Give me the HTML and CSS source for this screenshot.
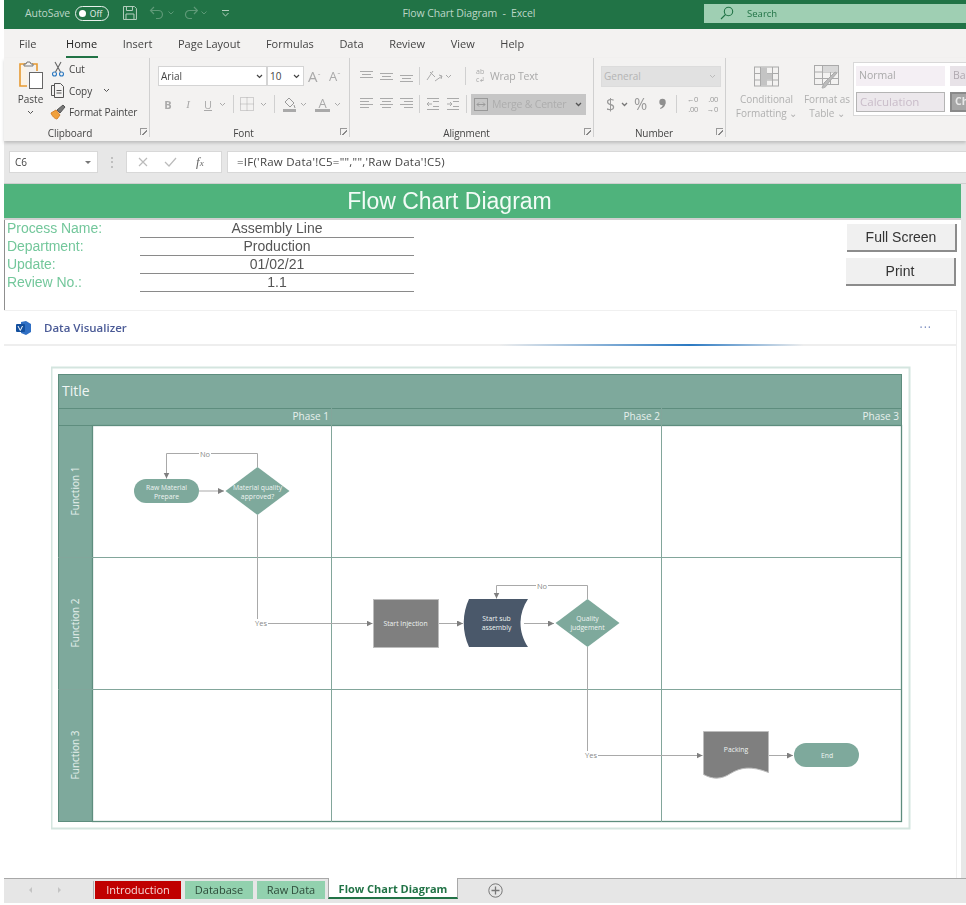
FILE: index.html
```html
<!DOCTYPE html>
<html lang="en">
<head>
<meta charset="utf-8">
<title>Flow Chart Diagram - Excel</title>
<link rel="stylesheet" href="styles.css">
</head>
<body>
<div class="app">
  <header class="titlebar">
    <span class="autosave">AutoSave</span>
    <span class="toggle"><i class="knob"></i><b>Off</b></span>
    <svg class="qat-save" width="16" height="16" viewBox="0 0 16 16" fill="none" stroke="#b5d0bf"><path d="M1.500 1.500h11l2 2v11h-13z"/><path d="M4.500 1.500v4h6v-4M4 14.500v-5.500h8v5.500"/></svg>
    <svg class="qat-undo" width="16" height="14" viewBox="0 0 16 14" fill="none" stroke="#5f9a78" stroke-width="1.200"><path d="M5 1 1.500 4.500 5 8M1.500 4.500h8a4 4 0 0 1 0 8H7"/></svg>
    <svg class="qat-chev" width="6" height="4" viewBox="0 0 6 4" fill="none" stroke="#5f9a78"><path d="m.5.500 2.500 2.500 2.500-2.500"/></svg>
    <svg class="qat-redo" width="16" height="14" viewBox="0 0 16 14" fill="none" stroke="#5f9a78" stroke-width="1.200"><path d="M11 1l3.500 3.500L11 8M14.500 4.500h-8a4 4 0 0 0 0 8H9"/></svg>
    <svg class="qat-chev" width="6" height="4" viewBox="0 0 6 4" fill="none" stroke="#5f9a78"><path d="m.5.500 2.500 2.500 2.500-2.500"/></svg>
    <svg class="qat-more" width="7" height="7" viewBox="0 0 7 7" fill="none" stroke="#b5d0bf"><path d="M0 .500h7M.5 3l3 3 3-3"/></svg>
    <span class="doc-title">Flow Chart Diagram &nbsp;-&nbsp; Excel</span>
    <div class="search">
      <svg width="14" height="14" viewBox="0 0 14 14" fill="none" stroke="#217346" stroke-width="1.100"><circle cx="8.500" cy="5.500" r="4.200"/><path d="M5.500 8.500 1 13"/></svg>
      <span>Search</span>
    </div>
  </header>

  <nav class="tabs">
    <span class="tab">File</span>
    <span class="tab tab-home">Home</span>
    <span class="tab">Insert</span>
    <span class="tab">Page Layout</span>
    <span class="tab">Formulas</span>
    <span class="tab">Data</span>
    <span class="tab">Review</span>
    <span class="tab">View</span>
    <span class="tab">Help</span>
  </nav>

  <section class="ribbon">
    <div class="group g-clip">
      <div class="group-body clip-body">
        <div class="paste">
          <svg width="26" height="29" viewBox="0 0 26 29" fill="none"><path d="M8 3H2v22h7" stroke="#e79a32" stroke-width="1.600" fill="#fbf3e6"/><path d="M14 3h5v7" stroke="#e79a32" stroke-width="1.600"/><path d="M6 5V3h2l1-2h3l1 2h2v2z" fill="#f3f2f1" stroke="#777"/><rect x="11.500" y="11.500" width="13" height="16" fill="#fff" stroke="#666"/></svg>
          <span>Paste</span>
          <svg class="chev" width="7" height="5" viewBox="0 0 7 5" fill="none" stroke="#555"><path d="m1 1 2.500 2.500L6 1"/></svg>
        </div>
        <div class="clip-list">
          <div class="clip-item">
            <svg width="16" height="16" viewBox="0 0 16 16" fill="none" stroke-width="1.100"><path d="M5 1l5.500 10M11 1 5.500 11" stroke="#666"/><circle cx="4.500" cy="13" r="2" stroke="#2b79c2"/><circle cx="11.500" cy="13" r="2" stroke="#2b79c2"/></svg>
            <span>Cut</span>
          </div>
          <div class="clip-item">
            <svg width="16" height="16" viewBox="0 0 16 16" fill="none" stroke="#555"><path d="M4.500 2.500h-3v10h3"/><path d="M4.500 .5h6l3 3v11h-9z" fill="#f3f2f1"/><path d="M6.500 7.500h5M6.500 10h5"/></svg>
            <span>Copy</span>
            <svg class="copy-chev" width="7" height="5" viewBox="0 0 7 5" fill="none" stroke="#555"><path d="m1 1 2.500 2.500L6 1"/></svg>
          </div>
          <div class="clip-item">
            <svg width="16" height="16" viewBox="0 0 16 16" fill="none"><path d="M1 9l5-3 4 5-3 4c-2 0-5-3-6-6z" fill="#f0a03c" stroke="#d9822b"/><path d="M7 6l6-5 2 2-5 6z" fill="#777" stroke="#555"/></svg>
            <span>Format Painter</span>
          </div>
        </div>
      </div>
      <div class="group-label lb-clip"><span>Clipboard</span><i class="launcher"></i></div>
    </div>

    <div class="group g-font">
      <div class="group-body">
        <div class="row font-row1">
          <div class="combo combo-font"><span>Arial</span><svg width="7" height="5" viewBox="0 0 7 5" fill="none" stroke="#444" stroke-width="1.200"><path d="m1 1 2.500 2.500L6 1"/></svg></div>
          <div class="combo combo-size"><span>10</span><svg width="7" height="5" viewBox="0 0 7 5" fill="none" stroke="#444" stroke-width="1.200"><path d="m1 1 2.500 2.500L6 1"/></svg></div>
          <span class="grow">A<sup>ˆ</sup></span>
          <span class="shrink">A<sup>ˇ</sup></span>
        </div>
        <div class="row font-row2">
          <span class="slot bold">B</span>
          <span class="slot italic">I</span>
          <span class="slot under">U</span>
          <svg class="m2" width="7" height="5" viewBox="0 0 7 5" fill="none" stroke="#aaa"><path d="m1 1 2.500 2.500L6 1"/></svg>
          <i class="sep sep-a"></i>
          <svg width="14" height="14" viewBox="0 0 14 14" fill="none" stroke="#aaa" stroke-dasharray="1 1"><path d="M.5.500h13v13H.5zM7 .5v13M.5 7h13"/></svg>
          <svg class="m6" width="7" height="5" viewBox="0 0 7 5" fill="none" stroke="#aaa"><path d="m1 1 2.500 2.500L6 1"/></svg>
          <i class="sep sep-b"></i>
          <svg width="15" height="15" viewBox="0 0 15 15" fill="none"><path d="M7 1l5 5-4 4-5-5z" stroke="#999"/><path d="M12 8l1 3" stroke="#999"/><rect x="1" y="12" width="13" height="3" fill="#a9a9a9"/></svg>
          <svg class="m3" width="7" height="5" viewBox="0 0 7 5" fill="none" stroke="#aaa"><path d="m1 1 2.500 2.500L6 1"/></svg>
          <span class="font-color">A</span>
          <svg class="m4" width="7" height="5" viewBox="0 0 7 5" fill="none" stroke="#aaa"><path d="m1 1 2.500 2.500L6 1"/></svg>
        </div>
      </div>
      <div class="group-label lb-font"><span>Font</span><i class="launcher"></i></div>
    </div>

    <div class="group g-align">
      <div class="group-body">
        <div class="row align-row1">
          <svg width="20" height="12" viewBox="0 0 20 12" stroke="#aaa"><path d="M3 1.500h13M5 4.500h9M3 7.500h13"/></svg>
          <svg width="20" height="12" viewBox="0 0 20 12" stroke="#aaa"><path d="M3 3.500h13M5 6.500h9M3 9.500h13"/></svg>
          <svg width="20" height="12" viewBox="0 0 20 12" stroke="#aaa"><path d="M3 5.500h13M5 8.500h9M3 11.500h13"/></svg>
          <i class="sep sep-c"></i>
          <svg width="17" height="14" viewBox="0 0 17 14" fill="none" stroke="#aaa"><path d="M1 11 7 2M4 3l5 5M9 12l7-5M13 6l3 1-1 3"/></svg>
          <svg class="m2" width="7" height="5" viewBox="0 0 7 5" fill="none" stroke="#aaa"><path d="m1 1 2.500 2.500L6 1"/></svg>
          <i class="sep sep-d"></i>
          <span class="wrap-ico">ab<br>c↲</span>
          <span class="wrap-text">Wrap Text</span>
        </div>
        <div class="row align-row2">
          <svg width="20" height="12" viewBox="0 0 20 12" stroke="#aaa"><path d="M3 .5h13M3 3.500h9M3 6.500h13M3 9.500h9"/></svg>
          <svg width="20" height="12" viewBox="0 0 20 12" stroke="#aaa"><path d="M3 .5h13M5 3.500h9M3 6.500h13M5 9.500h9"/></svg>
          <svg width="20" height="12" viewBox="0 0 20 12" stroke="#aaa"><path d="M3 .5h13M7 3.500h9M3 6.500h13M7 9.500h9"/></svg>
          <i class="sep sep-c"></i>
          <svg width="14" height="12" viewBox="0 0 14 12" fill="none" stroke="#aaa"><path d="M1 .5h12M7 3.500h6M6 6H1m2-2L1 6l2 2M7 8.500h6M1 11.500h12"/></svg>
          <svg class="m6" width="14" height="12" viewBox="0 0 14 12" fill="none" stroke="#aaa"><path d="M1 .5h12M7 3.500h6M1 6h5m-2-2 2 2-2 2M7 8.500h6M1 11.500h12"/></svg>
          <i class="sep sep-e"></i>
          <div class="merge">
            <svg width="14" height="13" viewBox="0 0 14 13" fill="none" stroke="#999"><rect x=".5" y=".5" width="13" height="12"/><path d="M3 6.500h8m-2-2 2 2-2 2M5 4.500l-2 2 2 2"/></svg>
            <span>Merge &amp; Center</span>
            <svg width="7" height="5" viewBox="0 0 7 5" fill="none" stroke="#555" stroke-width="1.300"><path d="m1 1 2.500 2.500L6 1"/></svg>
          </div>
        </div>
      </div>
      <div class="group-label lb-align"><span>Alignment</span><i class="launcher"></i></div>
    </div>

    <div class="group g-num">
      <div class="group-body">
        <div class="row num-row1">
          <div class="combo combo-num"><span>General</span><svg width="7" height="5" viewBox="0 0 7 5" fill="none" stroke="#bbb"><path d="m1 1 2.500 2.500L6 1"/></svg></div>
        </div>
        <div class="row num-row2">
          <span class="num-dollar">$</span>
          <svg class="m-dollar" width="7" height="5" viewBox="0 0 7 5" fill="none" stroke="#777" stroke-width="1.300"><path d="m1 1 2.500 2.500L6 1"/></svg>
          <span class="num-pct">%</span>
          <svg class="num-comma" width="9" height="14" viewBox="0 0 9 14" fill="#8f8f8f"><circle cx="4.500" cy="5" r="3.200"/><path d="M7.500 5.500C7.500 9 5.500 11 2.500 12l-.5-1C4 10 5 8.500 5 7z"/></svg>
          <i class="sep sep-f"></i>
          <span class="dec">←0<br>.00</span>
          <span class="dec dec2">.00<br>→0</span>
        </div>
      </div>
      <div class="group-label lb-num"><span>Number</span><i class="launcher"></i></div>
    </div>

    <div class="g-styles">
      <div class="style-btn sb-cond">
        <svg width="26" height="21" viewBox="0 0 26 21" fill="none" stroke="#aaa"><rect x=".5" y=".5" width="24" height="19"/><path d="M.5 7h24M.5 13.500h24M6.500.5v19M18.500.5v19"/><path d="M7 1h6v6h5v6h-5v6H7z" fill="#c4c4c4" stroke="none"/></svg>
        <span>Conditional<br>Formatting ⌄</span>
      </div>
      <div class="style-btn sb-table">
        <svg width="26" height="24" viewBox="0 0 26 24" fill="none" stroke="#aaa"><rect x=".5" y=".5" width="24" height="19"/><path d="M.5 7h24M.5 13.500h24M8.500.5v19M16.500.5v19"/><path d="M9 1h15v6H9z" fill="#d8d8d8" stroke="none"/><path d="M23 8 15 17l-2 3c-1 2-3 3-5 3l2-5 11-11z" fill="#bbb"/></svg>
        <span>Format as<br>Table ⌄</span>
      </div>
      <div class="style-box">
        <div class="cell-style cs-normal">Normal</div>
        <div class="cell-style cs-bad">Bad</div>
        <div class="cell-style cs-calc">Calculation</div>
        <div class="cell-style cs-check">Check</div>
      </div>
    </div>
  </section>

  <section class="formula">
    <div class="namebox"><span>C6</span><i class="tri"></i></div>
    <span class="vdots">⋮</span>
    <div class="fx-btns">
      <svg width="12" height="12" viewBox="0 0 12 12" fill="none" stroke="#bbb" stroke-width="1.200"><path d="m2 2 8 8M10 2l-8 8"/></svg>
      <svg width="14" height="12" viewBox="0 0 14 12" fill="none" stroke="#bbb" stroke-width="1.200"><path d="m2 6 4 4 7-8"/></svg>
      <span class="fx"><i>f</i><small>x</small></span>
    </div>
    <div class="fx-input">=IF('Raw Data'!C5="","",'Raw Data'!C5)</div>
  </section>

  <main class="sheet">
    <div class="sheet-main">
      <h1 class="banner">Flow Chart Diagram</h1>
      <div class="form-area">
        <dl class="form">
          <dt>Process Name:</dt><dd>Assembly Line</dd>
          <dt>Department:</dt><dd>Production</dd>
          <dt>Update:</dt><dd>01/02/21</dd>
          <dt>Review No.:</dt><dd>1.1</dd>
        </dl>
        <div class="sheet-btns">
          <button class="xl-btn btn-full">Full Screen</button>
          <button class="xl-btn">Print</button>
        </div>
      </div>
      <section class="panel">
        <div class="panel-head">
          <svg width="15" height="14" viewBox="0 0 15 14"><path d="M5 1 10 0l5 3v8l-5 3-5-2z" fill="#2f6fc4"/><rect x="0" y="3" width="9" height="8" rx="1" fill="#124f9e"/><path d="m2 5 2.300 4.500L6.500 5" fill="none" stroke="#fff"/></svg>
          <strong>Data Visualizer</strong>
          <span class="dots">···</span>
        </div>
        <div class="panel-rule"></div>
        <div class="canvas">
          <svg class="chart" width="860" height="464" viewBox="51 366 860 464">
            <defs>
              <marker id="ah" markerWidth="7" markerHeight="7" refX="6" refY="3" orient="auto" markerUnits="userSpaceOnUse"><path d="M0 0 6 3 0 6z" fill="#7f7f7f"/></marker>
            </defs>
            <rect class="frame" x="51.500" y="367.500" width="858" height="461"/>
            <rect class="band" x="58.500" y="374.500" width="843" height="34"/>
            <rect class="band" x="58.500" y="408.500" width="843" height="17"/>
            <rect class="band" x="58.500" y="425.500" width="34" height="396"/>
            <rect class="lane" x="92.500" y="425.500" width="809" height="396"/>
            <path class="grid" d="M58 557.500h843M58 689.500h843M331.500 408v414M661.500 408v414"/>
            <text class="t-title" x="62" y="396">Title</text>
            <text class="t-phase" x="329" y="420">Phase 1</text>
            <text class="t-phase" x="660" y="420">Phase 2</text>
            <text class="t-phase" x="899" y="420">Phase 3</text>
            <text class="t-func" transform="translate(79 491) rotate(-90)">Function 1</text>
            <text class="t-func" transform="translate(79 623) rotate(-90)">Function 2</text>
            <text class="t-func" transform="translate(79 755) rotate(-90)">Function 3</text>

            <path class="conn" d="M199 491h25" marker-end="url(#ah)"/>
            <path class="conn" d="M257.500 467v-13.500h-91v25" marker-end="url(#ah)"/>
            <path class="conn" d="M257.500 515v108.500h115" marker-end="url(#ah)"/>
            <path class="conn" d="M438 623.500h25" marker-end="url(#ah)"/>
            <path class="conn" d="M524 623.500h30" marker-end="url(#ah)"/>
            <path class="conn" d="M587.500 599v-13.500h-91v13" marker-end="url(#ah)"/>
            <path class="conn" d="M587.500 647v108.500h115" marker-end="url(#ah)"/>
            <path class="conn" d="M769 755.500h24" marker-end="url(#ah)"/>

            <rect class="t-bg" x="199" y="450" width="12" height="8"/>
            <text class="t-lbl" x="205" y="457">No</text>
            <rect class="t-bg" x="255" y="619" width="13" height="8"/>
            <text class="t-lbl" x="261" y="626">Yes</text>
            <rect class="t-bg" x="536" y="582" width="12" height="8"/>
            <text class="t-lbl" x="542" y="589">No</text>
            <rect class="t-bg" x="585" y="751" width="13" height="8"/>
            <text class="t-lbl" x="591" y="758">Yes</text>

            <rect class="s-teal" x="134" y="479" width="65" height="24" rx="12"/>
            <text class="t-node" x="166.500" y="489.500">Raw Material</text>
            <text class="t-node" x="166.500" y="498.500">Prepare</text>
            <path class="s-teal" d="M257.500 467 289.500 491 257.500 515 225.500 491z"/>
            <text class="t-node" x="257.500" y="489.500">Material quality</text>
            <text class="t-node" x="257.500" y="498.500">approved?</text>

            <rect class="s-grey" x="373.500" y="599.500" width="65" height="48"/>
            <text class="t-node" x="405.500" y="626">Start Injection</text>
            <path class="s-navy" d="M469 599h59c-10 15-10 33 0 48h-59c-7-15-7-33 0-48z"/>
            <text class="t-node" x="496.500" y="621">Start sub</text>
            <text class="t-node" x="496.500" y="630">assembly</text>
            <path class="s-teal" d="M587.500 599 619.500 623 587.500 647 555.500 623z"/>
            <text class="t-node" x="587.500" y="621">Quality</text>
            <text class="t-node" x="587.500" y="630">judgement</text>

            <path class="s-grey" d="M703.500 731.500h65v41c-18-7-28-5-38 1-9 6-18 6-27 1z"/>
            <text class="t-node" x="736" y="752">Packing</text>
            <rect class="s-teal" x="794" y="743" width="65" height="24" rx="12"/>
            <text class="t-node" x="827" y="758">End</text>
          </svg>
        </div>
      </section>
    </div>
    <div class="scrollbar"></div>
  </main>

  <footer class="sheetbar">
    <svg class="nav-arrows" width="34" height="8" viewBox="0 0 34 8"><path d="M4 1 1 4l3 3zM30 1l3 3-3 3z" fill="#c4c4c4"/></svg>
    <i class="tab-sep"></i>
    <span class="stab stab-red">Introduction</span>
    <span class="stab stab-green">Database</span>
    <span class="stab stab-green">Raw Data</span>
    <span class="stab stab-active">Flow Chart Diagram</span>
    <svg class="add" width="15" height="15" viewBox="0 0 15 15" fill="none" stroke="#777"><circle cx="7.500" cy="7.500" r="6.700"/><path d="M7.500 3.500v8M3.500 7.500h8" stroke-width="1.300"/></svg>
  </footer>
</div>
</body>
</html>
```
FILE: styles.css
```css
* { box-sizing: border-box; }
html, body { margin: 0; padding: 0; background: #fff; }
body { font-family: "Open Sans", "Noto Sans", sans-serif; color: #444; }
.app { width: 966px; height: 905px; padding-left: 4px; overflow: hidden; filter: blur(.35px); }
i { font-style: normal; }

/* title bar */
.titlebar { height: 29px; padding-bottom: 3px; background: #217346; display: flex; align-items: center; color: #bcd6c6; font-size: 10.5px; }
.autosave { margin-left: 21px; width: 50px; letter-spacing: -.1px; }
.toggle { width: 34px; height: 15px; border: 1.5px solid #e8f1ec; border-radius: 8px; display: flex; align-items: center; padding-left: 3px; color: #e8f1ec; font-size: 8.5px; }
.toggle .knob { width: 7px; height: 7px; border-radius: 50%; background: #fff; margin-right: 4px; }
.toggle b { font-weight: 400; }
.qat-save { margin-left: 13px; }
.qat-undo { margin-left: 11px; }
.qat-chev { margin-left: 3px; }
.qat-redo { margin-left: 9px; }
.qat-more { margin-left: 15px; }
.doc-title { margin-left: 173px; width: 303px; font-size: 10.5px; color: #bcd6c6; letter-spacing: -.1px; white-space: nowrap; }
.search { width: 263px; height: 19px; background: #9fcfb3; display: flex; align-items: center; padding-left: 16px; color: #217346; font-size: 9.5px; }
.search span { margin-left: 13px; }

/* tabs */
.tabs { height: 29px; background: #f3f2f1; display: flex; align-items: center; padding-left: 15px; gap: 25.6px; font-size: 11px; color: #444; }
.tab { position: relative; line-height: 24px; white-space: nowrap; }
.tab-home { margin-left: 4px; color: #222; }
.tab-home::after { content: ""; position: absolute; left: 0; right: -1px; bottom: -2px; height: 2px; background: #217346; }

/* ribbon */
.ribbon { height: 83px; background: #f3f2f1; display: flex; font-size: 10px; box-shadow: 0 2px 3px rgba(0,0,0,.18); position: relative; }
.group { display: flex; flex-direction: column; height: 79px; border-right: 1px solid #d0d0d0; flex: none; }
.group-body { flex: 1; min-height: 0; }
.group-label { height: 14px; margin-bottom: -3px; flex: none; position: relative; text-align: center; font-size: 10px; color: #444; line-height: 14px; letter-spacing: -.1px; }
.lb-clip { padding-right: 13px; }
.lb-font { padding-right: 20px; }
.lb-align { padding-right: 17px; }
.lb-num { padding-right: 18px; }
.launcher { position: absolute; right: 2px; top: 2px; width: 7px; height: 7px; border-left: 1px solid #999; border-top: 1px solid #999; background: linear-gradient(135deg, transparent 55%, #888 55%, #888 70%, transparent 70%); }
.row { display: flex; align-items: center; }
.sep { display: block; width: 1px; height: 18px; background: #d0d0d0; flex: none; }
.m2 { margin-left: 2px; }
.m3 { margin-left: 3px; }
.m4 { margin-left: 4px; }
.m6 { margin-left: 6px; }
.g-clip { width: 146px; }
.clip-body { display: flex; padding: 3px 0 0 12px; }
.paste { width: 29px; display: flex; flex-direction: column; align-items: center; font-size: 10px; }
.paste span { margin-top: 2px; line-height: 14px; color: #444; }
.paste .chev { margin-top: 4px; }
.clip-list { margin-left: 5px; display: flex; flex-direction: column; gap: 5.500px; }
.clip-item { display: flex; align-items: center; height: 16px; gap: 3px; font-size: 10px; letter-spacing: -.1px; white-space: nowrap; }
.copy-chev { margin-left: 8px; }
.g-font { width: 200px; padding-left: 8px; }
.font-row1 { margin-top: 8px; height: 20px; }
.combo { height: 20px; background: #fff; border: 1px solid #d4d4d4; display: flex; align-items: center; justify-content: space-between; padding: 0 3px 0 2px; font-size: 10px; flex: none; }
.combo-font { width: 109px; }
.combo-size { width: 37px; }
.grow { margin-left: 4px; width: 21px; font-size: 15px; color: #a9a9a9; line-height: 1; white-space: nowrap; }
.shrink { width: 16px; font-size: 13px; color: #a9a9a9; line-height: 1; white-space: nowrap; }
.grow sup, .shrink sup { font-size: 8px; vertical-align: 3px; line-height: 0; }
.font-row2 { margin-top: 8px; height: 20px; }
.slot { width: 20px; text-align: center; color: #a9a9a9; font-size: 11px; flex: none; }
.bold { font-weight: 700; }
.italic { font-style: italic; font-family: "Liberation Serif", serif; }
.under { text-decoration: underline; margin-right: -1px; }
.sep-a { margin: 0 6px 0 7px; }
.sep-b { margin: 0 7px 0 7px; }
.font-color { width: 15px; margin-left: 8px; font-size: 13px; color: #a9a9a9; border-bottom: 3px solid #a9a9a9; line-height: 12px; text-align: center; flex: none; }
.g-align { width: 244px; padding-left: 7px; }
.align-row1 { margin-top: 8px; height: 20px; }
.sep-c { margin: 0 6px 0 2px; }
.sep-d { margin: 0 7px 0 13px; }
.wrap-ico { width: 14px; font-size: 7px; line-height: 8px; color: #a9a9a9; margin-left: 3px; }
.wrap-text { color: #a9a9a9; font-size: 10.5px; letter-spacing: -.2px; white-space: nowrap; }
.align-row2 { margin-top: 8px; height: 20px; }
.sep-e { margin: 0 4px 0 6px; }
.merge { width: 115px; height: 21px; background: #c6c6c6; display: flex; align-items: center; padding: 0 4px 0 3px; color: #adadad; font-size: 10.5px; letter-spacing: -.2px; white-space: nowrap; }
.merge span { margin: 0 auto 0 4px; }
.g-num { width: 132px; padding-left: 7px; }
.num-row1 { margin-top: 8px; height: 20px; }
.combo-num { width: 120px; height: 21px; background: #e1e1e1; border-color: #dcdcdc; color: #b4b4b4; padding: 0 4px 0 2px; }
.num-row2 { margin-top: 8px; height: 20px; padding-left: 5px; color: #999; }
.num-dollar { font-size: 16px; width: 9px; }
.m-dollar { margin-left: 6px; }
.num-pct { margin-left: 6px; font-size: 16px; width: 17px; }
.num-comma { margin-left: 7px; flex: none; }
.sep-f { margin: 0 6px 0 9px; }
.dec { font-size: 7.5px; line-height: 10px; width: 15px; text-align: right; letter-spacing: -.3px; white-space: nowrap; }
.dec2 { margin-left: 5px; }
.g-styles { flex: 1; display: flex; min-width: 0; overflow: hidden; }
.style-btn { display: flex; flex-direction: column; align-items: center; color: #b0b0b0; font-size: 10px; line-height: 14px; text-align: center; letter-spacing: -.05px; white-space: nowrap; flex: none; }
.style-btn svg { height: 24px; flex: none; margin-top: 7px; margin-bottom: 3px; }
.style-btn span { display: block; }
.sb-cond { width: 63px; margin-left: 9px; }
.sb-table { width: 52px; margin-left: 3px; }
.style-box { margin: 4px 0 0; width: 122px; height: 54px; background: #fff; border: 1px solid #d8d8d8; border-right: 0; display: grid; grid-template-columns: 89px 40px; grid-template-rows: 20px 20px; gap: 6px 5px; padding: 3px 0 0 2px; font-size: 10.5px; }
.cell-style { line-height: 19px; padding-left: 3px; white-space: nowrap; overflow: hidden; }
.cs-normal { background: #f4eff4; color: #a9a9a9; }
.cs-bad { background: #e8e3e8; color: #b0a9b0; }
.cs-calc { background: #ece8ec; border: 1px solid #b4b4b4; color: #c9bcc9; line-height: 17px; font-size: 11.5px; }
.cs-check { background: #a6a6a6; border: 2px solid #8a8a8a; color: #e8e8e8; line-height: 15px; font-weight: 700; }

/* formula bar */
.formula { height: 42px; background: #e7e7e7; display: flex; align-items: flex-start; padding: 10px 0 0 5px; }
.namebox { width: 89px; height: 22px; background: #fff; border: 1px solid #d8d8d8; display: flex; align-items: center; justify-content: space-between; padding: 0 6px 0 5px; font-size: 10px; }
.tri { width: 0; height: 0; border: 3.5px solid transparent; border-top-color: #777; border-bottom: 0; }
.vdots { width: 28px; text-align: center; color: #aaa; font-size: 12px; line-height: 22px; }
.fx-btns { width: 96px; height: 22px; background: #fff; border: 1px solid #d8d8d8; display: flex; align-items: center; padding-left: 10px; gap: 14px; }
.fx { color: #666; font-family: "Liberation Serif", serif; font-size: 13px; font-style: italic; margin-left: 5px; }
.fx i { font-style: italic; }
.fx small { font-size: 9px; }
.fx-input { flex: 1; height: 22px; margin-left: 5px; background: #fff; border: 1px solid #d8d8d8; border-right: 0; padding-left: 9px; font-size: 11.5px; line-height: 20px; color: #444; letter-spacing: .25px; white-space: nowrap; }

/* sheet */
.sheet { display: flex; height: 695px; border-top: 1px solid #cfcfcf; }
.sheet-main { width: 957px; display: flex; flex-direction: column; }
.scrollbar { flex: 1; background: #e7e7e7; }
.banner { margin: 0; height: 36px; padding-right: 66px; background: #4fb37c; border-bottom: 2px solid #d0d0d0; color: #f2fbf6; font: 400 23px/34px "Liberation Sans", sans-serif; text-align: center; }
.form-area { height: 90px; display: flex; justify-content: space-between; border-left: 1px solid #8f8f8f; padding-left: 2px; margin-right: 4px; font-family: "Liberation Sans", sans-serif; font-size: 14px; }
.form { margin: 0; display: grid; grid-template-columns: 133px 274px; grid-auto-rows: 18px; }
.form dt { color: #73c79b; line-height: 17px; letter-spacing: -.05px; white-space: nowrap; }
.form dd { margin: 0; text-align: center; line-height: 17px; border-bottom: 1px solid #8a8a8a; color: #555; }
.sheet-btns { display: flex; flex-direction: column; gap: 6px; padding-top: 4px; width: 111px; }
.xl-btn { width: 110px; height: 28px; background: #f0f0f0; border: 0; border-bottom: 2px solid #8c8c8c; border-right: 2px solid #8c8c8c; font: 14px "Liberation Sans", sans-serif; color: #333; padding: 0; }
.btn-full { margin-left: 1px; }
.panel { flex: 1; display: flex; flex-direction: column; margin-right: 4px; border-right: 1px solid #eee; border-top: 1px solid #f0f0f0; min-height: 0; }
.panel-head { height: 33px; display: flex; align-items: center; padding-left: 12px; font-size: 11.5px; }
.panel-head strong { margin-left: 13px; font-weight: 600; color: #4a5a96; }
.dots { margin-left: auto; margin-right: 24px; color: #7a8cc0; font-size: 12px; letter-spacing: 1px; }
.panel-rule { height: 2px; flex: none; background: linear-gradient(90deg, #eee 0, #eee 52%, #2b79c2 72%, #eee 84%, #eee 100%); }
.canvas { flex: 1; padding: 20px 0 0 47px; min-height: 0; }
.chart { display: block; }
.frame { fill: #fff; stroke: #d4e5df; stroke-width: 2; }
.band { fill: #7ea99c; stroke: #5e8d7e; }
.lane { fill: #fff; stroke: #5e8d7e; stroke-width: 1.300; }
.grid { fill: none; stroke: #82a69b; stroke-width: 1; }
.t-title { fill: #f0f6f4; font-size: 14px; }
.t-phase { fill: #e6f0ed; font-size: 10px; text-anchor: end; }
.t-func { fill: #e6f0ed; font-size: 10px; text-anchor: middle; }
.conn { fill: none; stroke: #a9a9a9; stroke-width: 1; }
.t-bg { fill: #fff; }
.t-lbl { fill: #8a8a8a; font-size: 7.5px; text-anchor: middle; }
.t-node { fill: #eef4f2; font-size: 6.8px; text-anchor: middle; }
.s-teal { fill: #7ea99c; }
.s-grey { fill: #7f7f7f; stroke: #bdbdbd; }
.s-navy { fill: #4a586a; }

/* sheet tabs */
.sheetbar { height: 25px; background: #e6e6e6; border-top: 1px solid #a8a8a8; display: flex; align-items: flex-start; font-size: 11px; position: relative; }
.nav-arrows { margin: 7px 0 0 24px; }
.tab-sep { width: 1px; height: 18px; margin: 2px 1px 0 31px; background: #b0b0b0; }
.stab { height: 18px; margin-top: 2px; line-height: 18px; text-align: center; margin-right: 4px; white-space: nowrap; }
.stab-red { width: 86px; background: #c00000; color: #f6dada; }
.stab-green { width: 68px; background: #92d1ae; color: #2d4a39; }
.stab-active { width: 130px; height: 21px; margin: -1px 0 0 -1px; background: #fff; border: 1px solid #a8a8a8; border-top: 0; border-bottom: 2px solid #217346; color: #217346; font-weight: 700; line-height: 22px; }
.add { margin: 4px 0 0 30px; }
```
